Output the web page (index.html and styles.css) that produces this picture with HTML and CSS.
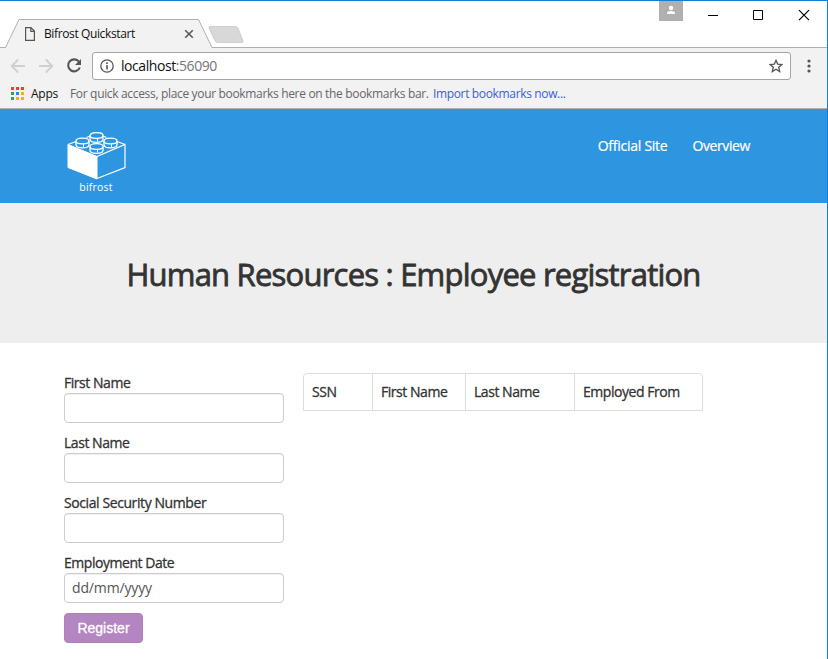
FILE: index.html
```html
<!DOCTYPE html>
<html lang="en">
<head>
<meta charset="utf-8">
<title>Bifrost Quickstart</title>
<link rel="stylesheet" href="styles.css">
</head>
<body>
<div class="window">
  <div class="tabstrip">
    <svg class="tab-shape" width="250" height="47" viewBox="0 1 250 47">
      <path d="M0 47.5H5.5L19 19.5H198.5L212 47.5H250V48H0Z" fill="#f2f2f2"/>
      <path d="M0 47.5H5.5L19 19.5H198.5L212 47.5H250" fill="none" stroke="#b0b0b0"/>
      <path d="M210 26.5H235Q237 26.5 238 28L243 41Q243.300 42.500 242 42.500H217.500Q216 42.500 215 41L209 28Q208.500 26.500 210 26.500Z" fill="#d8d8d8" stroke="#c4c4c4" stroke-width=".7"/>
    </svg>
    <div class="tab">
      <svg width="12" height="14" viewBox="0 0 12 14" fill="none" stroke="#555" stroke-width="1.2"><path d="M1.600.6H7L10.400 4V13.400H1.600ZM6.800.8V4.300H10.200"/></svg>
      <span class="tab-title">Bifrost Quickstart</span>
      <svg class="tab-close" width="10" height="10" viewBox="0 0 10 10" stroke="#5a5a5a" stroke-width="1.600"><path d="M1.200 1.200L8.800 8.800M8.800 1.200L1.200 8.800"/></svg>
    </div>
    <div class="controls">
      <span class="user"><svg width="24" height="20" viewBox="0 0 24 20" fill="#fff"><circle cx="12" cy="7" r="2.200"/><path d="M8 13V12Q8.200 10 12 10T16 12V13Z"/></svg></span>
      <svg class="ctl" width="138" height="30" viewBox="0 0 138 30" fill="none" stroke="#000"><path d="M19 14.500H29M64.500 9.500H73.500V18.500H64.500Z"/><path d="M110 9.200L120 19.200M120 9.200L110 19.200" stroke-width="1.150"/></svg>
    </div>
  </div>
  <div class="toolbar">
    <svg class="nav" width="92" height="28" viewBox="0 0 92 28" fill="none" stroke="#cfcfcf" stroke-width="1.800">
      <path d="M25 14H12M18.200 7.500L11.700 14L18.200 20.500M39 14H52M45.800 7.500L52.300 14L45.800 20.500"/>
      <path d="M79 9.800A6 6 0 1 0 79.800 15.500" stroke="#555" stroke-width="2.100"/><path d="M81 7V13H75Z" fill="#555" stroke="none"/>
    </svg>
    <div class="address">
      <svg width="14" height="14" viewBox="0 0 14 14"><circle cx="7" cy="7" r="6.200" fill="none" stroke="#555" stroke-width="1.300"/><path d="M6.200 6H7.800V10.500H6.200ZM6.200 3.300H7.800V4.900H6.200Z" fill="#555"/></svg>
      <span class="url">localhost<span class="port">:56090</span></span>
      <svg class="star" width="14" height="14" viewBox="0 0 14 14" fill="none" stroke="#555" stroke-width="1.300"><path d="M7 1.300L8.700 5.100L12.900 5.500L9.700 8.200L10.700 12.500L7 10.200L3.300 12.500L4.300 8.200L1.100 5.500L5.300 5.100Z"/></svg>
    </div>
    <svg class="menu" width="4" height="14" viewBox="0 0 4 14" fill="#555"><circle cx="2" cy="2" r="1.600"/><circle cx="2" cy="7" r="1.600"/><circle cx="2" cy="12" r="1.600"/></svg>
  </div>
  <div class="bookmarks">
    <svg width="13" height="13" viewBox="0 0 13 13"><path fill="#f13a32" d="M0 0h3v3H0zM5 0h3v3H5zM10 0h3v3h-3z"/><path fill="#2ba35a" d="M0 5h3v3H0zM0 10h3v3H0z"/><path fill="#2589f5" d="M5 5h3v3H5z"/><path fill="#fbb000" d="M10 5h3v3h-3zM5 10h3v3H5zM10 10h3v3h-3z"/></svg>
    <span class="apps">Apps</span>
    <span class="hint">For quick access, place your bookmarks here on the bookmarks bar.</span>
    <span class="import">Import bookmarks now...</span>
  </div>
  <header class="site-header">
    <div class="brand">
      <svg width="60" height="50" viewBox="0 0 60 50" fill="none" stroke="#fff" stroke-width="1.300">
        <path d="M2 12.500L31 24.500V47L2 35.500Z" fill="#fff" stroke-width="1"/>
        <path d="M31 46.500L59 35.500V12.500L31 24.500M2 12.500L10 9.500M20.500 5.500L24.500 4M59 12.500L51 9.500M40.500 5.500L36.500 4" stroke-width="1.200"/>
        <g fill="#2e96e0">
          <path d="M24 3.500V7.200C24 11.400 37 11.400 37 7.200V3.500"/><ellipse cx="30.500" cy="3.500" rx="6.500" ry="2.900"/>
          <path d="M10 9V12.700C10 16.900 23 16.900 23 12.700V9"/><ellipse cx="16.500" cy="9" rx="6.500" ry="2.900"/>
          <path d="M38 9V12.700C38 16.900 51 16.900 51 12.700V9"/><ellipse cx="44.500" cy="9" rx="6.500" ry="2.900"/>
          <path d="M24 14.500V18.200C24 22.400 37 22.400 37 18.200V14.500"/><ellipse cx="30.500" cy="14.500" rx="6.500" ry="2.900"/>
        </g>
        <path d="M31.500 9.500V6.500M17.500 15V12M45.500 15V12M31.500 20.500V17.500" stroke-width="1"/>
      </svg>
      <span class="brand-name">bifrost</span>
    </div>
    <nav class="links"><a class="official">Official Site</a><a class="overview">Overview</a></nav>
  </header>
  <section class="hero"><h1>Human Resources : Employee registration</h1></section>
  <main class="content">
    <form class="form">
      <label>First Name</label><div class="input"></div>
      <label>Last Name</label><div class="input"></div>
      <label class="ssn">Social Security Number</label><div class="input"></div>
      <label>Employment Date</label><div class="input"><span class="date">dd/mm/yyyy</span></div>
      <button type="button" class="register">Register</button>
    </form>
    <div class="table">
      <span>SSN</span><span>First Name</span><span>Last Name</span><span>Employed From</span>
    </div>
  </main>
</div>
</body>
</html>
```
FILE: styles.css
```css
* { box-sizing: border-box; }
body { margin: 0; background: #fff; font-family: "Open Sans", "Noto Sans", sans-serif; }
svg { display: block; flex: none; }
span, a, label, h1 { white-space: nowrap; }
.window { width: 828px; height: 659px; overflow: hidden; border-top: 1px solid #0f7fd6; border-right: 1px solid #0f7fd6; }

.tabstrip { position: relative; height: 47px; border-bottom: 1px solid #b0b0b0; display: flex; justify-content: space-between; }
.tab-shape { position: absolute; left: 0; top: 0; }
.tab { position: relative; display: flex; align-items: center; width: 195px; height: 28px; margin-top: 19px; padding-left: 24px; }
.tab-title { margin-left: 8px; font-size: 12px; letter-spacing: -.38px; color: #111; line-height: 20px; }
.tab-close { margin-left: auto; margin-right: 1px; }
.controls { display: flex; }
.user { width: 24px; height: 20px; background: #b0b0b0; margin-right: 6px; }

.toolbar { height: 35px; background: #f2f2f2; display: flex; align-items: flex-start; padding-top: 4px; }
.address { width: 699px; height: 28px; border: 1px solid #a6a6a6; border-radius: 3px; background: #fff; display: flex; align-items: center; padding: 0 7px; }
.url { margin-left: 7px; font-size: 14px; color: #111; letter-spacing: -.43px; line-height: 20px; }
.port { color: #757575; }
.star { margin-left: auto; }
.menu { margin: 7px 0 0 16px; }

.bookmarks { height: 26px; background: #f2f2f2; border-bottom: 1px solid #b0b0b0; display: flex; align-items: center; padding: 0 0 4px 11px; font-size: 12px; line-height: 18px; }
.apps { margin-left: 7px; width: 39px; color: #111; letter-spacing: -.25px; }
.hint { width: 363px; color: #666; letter-spacing: -.33px; }
.import { color: #3b5fd9; letter-spacing: -.35px; }

.site-header { height: 94px; background: #2e96e0; display: flex; justify-content: space-between; padding: 23px 77px 0 66px; }
.brand { width: 60px; display: flex; flex-direction: column; align-items: center; }
.brand-name { font-size: 10.5px; line-height: 10px; color: #fff; letter-spacing: .2px; }
.links { display: flex; gap: 25px; color: #fff; font-size: 14px; line-height: 20px; padding-top: 4px; letter-spacing: -.4px; -webkit-text-stroke: .2px; }
.official { letter-spacing: -.25px; }

.hero { height: 140px; background: #eee; padding-top: 49px; text-align: center; }
h1 { margin: 0; font-size: 31px; line-height: 44px; font-weight: 500; color: #333; letter-spacing: -.78px; -webkit-text-stroke: .8px #333; }

.content { display: flex; align-items: flex-start; padding: 30px 0 0 64px; gap: 19px; color: #333; font-size: 14px; letter-spacing: -.46px; -webkit-text-stroke: .3px; }
.form { width: 220px; display: flex; flex-direction: column; align-items: flex-start; }
label { height: 20px; line-height: 20px; }
.ssn { letter-spacing: -.41px; }
.input { width: 220px; height: 30px; border: 1px solid #ccc; border-radius: 4px; margin-bottom: 10px; padding: 0 7px; line-height: 28px; box-shadow: inset 0 1px 1px rgba(0,0,0,.06); color: #555; -webkit-text-stroke: 0; }
.date { letter-spacing: -.15px; }
.register { width: 79px; height: 30px; border: 1px solid #ae80bc; border-radius: 4px; background: #b385c1; color: #fff; padding: 0; font: 14px/28px "Liberation Sans", Arial, sans-serif; -webkit-text-stroke: .3px; }
.table { display: grid; grid-template-columns: 68px 93px 109px 128px; height: 38px; width: 400px; border: 1px solid #ddd; border-radius: 4px 4px 0 0; }
.table span { padding-left: 8px; line-height: 36px; }
.table span + span { border-left: 1px solid #ddd; }
```
